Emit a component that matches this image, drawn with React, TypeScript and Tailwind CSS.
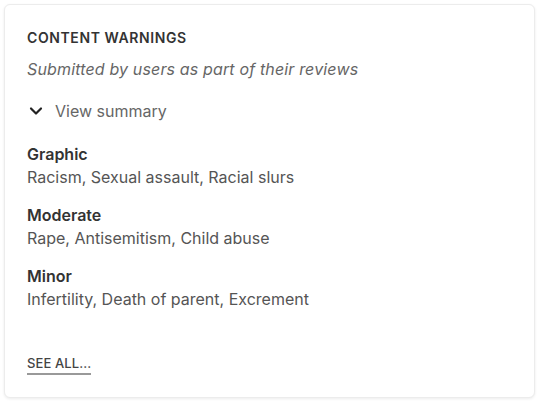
import React from "react";

const groups = [
  { title: "Graphic", items: "Racism, Sexual assault, Racial slurs" },
  { title: "Moderate", items: "Rape, Antisemitism, Child abuse" },
  { title: "Minor", items: "Infertility, Death of parent, Excrement" },
];

export default function App() {
  return (
    <div className="w-[540px] h-[405px] bg-white p-[4px] pr-[5px]" style={{ fontFamily: "Inter, 'Noto Sans', sans-serif" }}>
      <div className="h-[394px] rounded-[6px] border border-[#ececec] shadow-[0_1px_3px_rgba(0,0,0,0.08)] bg-white px-[22px] pt-[22px] text-[#3b3b3b]">
        <div className="text-[14px] leading-[22px] font-semibold tracking-[0.6px] text-[#333]">CONTENT WARNINGS</div>
        <div className="mt-[9px] text-[16px] leading-[22px] italic tracking-[0.15px] text-[#666]">Submitted by users as part of their reviews</div>
        <div className="mt-[20px] flex items-center h-[22px]">
          <svg width="14" height="10" viewBox="0 0 14 10" className="ml-[2px]">
            <path d="M2 2.5 L7 7.5 L12 2.5" fill="none" stroke="#222" strokeWidth="2.2" strokeLinecap="round" strokeLinejoin="round" />
          </svg>
          <span className="ml-[12px] text-[16px] text-[#666]">View summary</span>
        </div>
        <div className="mt-[21px] flex flex-col gap-[16px]">
          {groups.map((g) => (
            <div key={g.title}>
              <div className="text-[16px] leading-[22px] font-semibold text-[#333]">{g.title}</div>
              <div className="mt-[1px] text-[16px] leading-[22px] text-[#555]">{g.items}</div>
            </div>
          ))}
        </div>
        <div className="mt-[40px]">
          <span className="inline-block text-[13px] leading-[20px] font-medium tracking-[0.1px] text-[#444] border-b-2 border-[#999] pb-[0px]">SEE ALL...</span>
        </div>
      </div>
    </div>
  );
}
